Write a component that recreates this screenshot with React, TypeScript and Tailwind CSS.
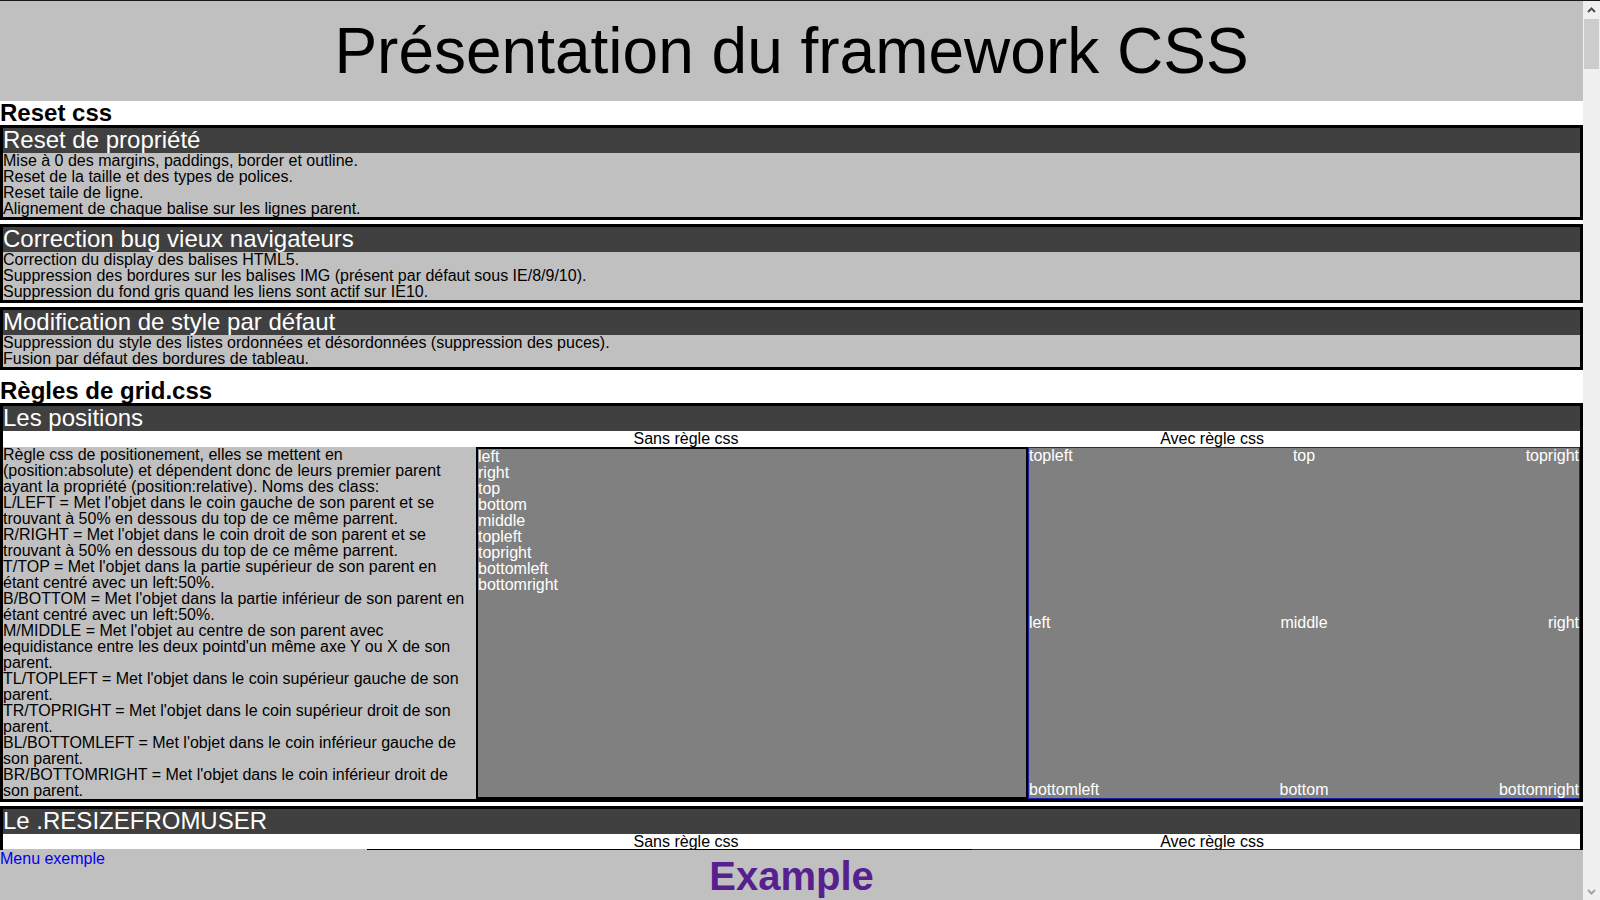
import React from "react";

function Box({ title, children }: { title: string; children: React.ReactNode }) {
  return (
    <div className="mb-[4px] border-[3px] border-black">
      <div className="bg-[#404040] pb-px text-[24px] leading-none text-white">{title}</div>
      {children}
    </div>
  );
}

function Lines({ lines }: { lines: string[] }) {
  return (
    <div className="bg-[#c0c0c0]">
      {lines.map((l) => (
        <div key={l}>{l}</div>
      ))}
    </div>
  );
}

function Labels() {
  return (
    <div className="flex bg-white pl-[420px]">
      <div className="w-[526px] text-center">Sans règle css</div>
      <div className="w-[526px] text-center">Avec règle css</div>
    </div>
  );
}

function Scrollbar() {
  return (
    <div className="flex w-[17px] shrink-0 flex-col bg-[#f0f0f0]">
      <div className="flex h-[17px] items-center justify-center">
        <svg width="9" height="6" viewBox="0 0 9 6">
          <path d="M1 5 L4.5 1.5 L8 5" stroke="#505050" strokeWidth="2" fill="none" />
        </svg>
      </div>
      <div className="mx-px mt-px h-[50px] bg-[#cdcdcd]"></div>
      <div className="flex-1"></div>
      <div className="flex h-[17px] items-center justify-center">
        <svg width="9" height="6" viewBox="0 0 9 6">
          <path d="M1 1 L4.5 4.5 L8 1" stroke="#a3a3a3" strokeWidth="2" fill="none" />
        </svg>
      </div>
    </div>
  );
}

const positionText = [
  "Règle css de positionement, elles se mettent en (position:absolute) et dépendent donc de leurs premier parent ayant la propriété (position:relative). Noms des class:",
  "L/LEFT = Met l'objet dans le coin gauche de son parent et se trouvant à 50% en dessous du top de ce même parrent.",
  "R/RIGHT = Met l'objet dans le coin droit de son parent et se trouvant à 50% en dessous du top de ce même parrent.",
  "T/TOP = Met l'objet dans la partie supérieur de son parent en étant centré avec un left:50%.",
  "B/BOTTOM = Met l'objet dans la partie inférieur de son parent en étant centré avec un left:50%.",
  "M/MIDDLE = Met l'objet au centre de son parent avec equidistance entre les deux pointd'un même axe Y ou X de son parent.",
  "TL/TOPLEFT = Met l'objet dans le coin supérieur gauche de son parent.",
  "TR/TOPRIGHT = Met l'objet dans le coin supérieur droit de son parent.",
  "BL/BOTTOMLEFT = Met l'objet dans le coin inférieur gauche de son parent.",
  "BR/BOTTOMRIGHT = Met l'objet dans le coin inférieur droit de son parent.",
];

const names = ["left", "right", "top", "bottom", "middle", "topleft", "topright", "bottomleft", "bottomright"];

export default function App() {
  return (
    <div className="flex h-screen flex-col border-t border-[#1a1a1a] font-['Liberation_Sans',Arial,sans-serif] text-[16px] leading-none text-black">
      <div className="flex min-h-0 flex-1">
        <div className="relative min-w-0 flex-1 overflow-hidden bg-white">
          <header className="bg-[#c0c0c0] pt-[18px] pb-[18px] text-center">
            <h1 className="text-[64px] leading-none">Présentation du framework CSS</h1>
          </header>

          <section className="mb-[9px]">
            <h2 className="text-[24px] font-bold leading-none">Reset css</h2>
            <Box title="Reset de propriété">
              <Lines
                lines={[
                  "Mise à 0 des margins, paddings, border et outline.",
                  "Reset de la taille et des types de polices.",
                  "Reset taile de ligne.",
                  "Alignement de chaque balise sur les lignes parent.",
                ]}
              />
            </Box>
            <Box title="Correction bug vieux navigateurs">
              <Lines
                lines={[
                  "Correction du display des balises HTML5.",
                  "Suppression des bordures sur les balises IMG (présent par défaut sous IE/8/9/10).",
                  "Suppression du fond gris quand les liens sont actif sur IE10.",
                ]}
              />
            </Box>
            <Box title="Modification de style par défaut">
              <Lines
                lines={[
                  "Suppression du style des listes ordonnées et désordonnées (suppression des puces).",
                  "Fusion par défaut des bordures de tableau.",
                ]}
              />
            </Box>
          </section>

          <section>
            <h2 className="text-[24px] font-bold leading-none">Règles de grid.css</h2>
            <Box title="Les positions">
              <Labels />
              <div className="flex">
                <div className="w-[473px] bg-[#c0c0c0]">
                  {positionText.map((t) => (
                    <div key={t}>{t}</div>
                  ))}
                </div>
                <div className="w-[552px] border-2 border-black bg-[#808080] text-white">
                  {names.map((n) => (
                    <div key={n}>{n}</div>
                  ))}
                </div>
                <div className="relative flex-1 border border-[#1f1fa5] bg-[#808080] text-white">
                  <span className="absolute left-0 top-0">topleft</span>
                  <span className="absolute left-1/2 top-0 -translate-x-1/2">top</span>
                  <span className="absolute right-0 top-0">topright</span>
                  <span className="absolute left-0 top-1/2 -translate-y-1/2">left</span>
                  <span className="absolute left-1/2 top-1/2 -translate-x-1/2 -translate-y-1/2">middle</span>
                  <span className="absolute right-0 top-1/2 -translate-y-1/2">right</span>
                  <span className="absolute bottom-0 left-0">bottomleft</span>
                  <span className="absolute bottom-0 left-1/2 -translate-x-1/2">bottom</span>
                  <span className="absolute bottom-0 right-0">bottomright</span>
                </div>
              </div>
            </Box>
            <Box title="Le .RESIZEFROMUSER">
              <Labels />
              <div className="-mt-px flex h-[400px]">
                <div className="w-[364px] bg-[#c0c0c0]"></div>
                <div className="w-[605px] border border-black bg-[#808080]"></div>
                <div className="flex-1 border border-[#1f1fa5] bg-[#808080]"></div>
              </div>
            </Box>
          </section>

          <footer className="absolute inset-x-0 bottom-0 grid h-[50px] grid-cols-[1fr_auto_1fr] bg-[#c0c0c0]">
            <div className="pt-px">
              <a href="#" className="text-[#0000ee]">
                Menu exemple
              </a>
            </div>
            <h1 className="pt-[6px] text-[40px] font-bold leading-none text-[#58208f]">Example</h1>
            <div></div>
          </footer>
        </div>
        <Scrollbar />
      </div>
    </div>
  );
}
